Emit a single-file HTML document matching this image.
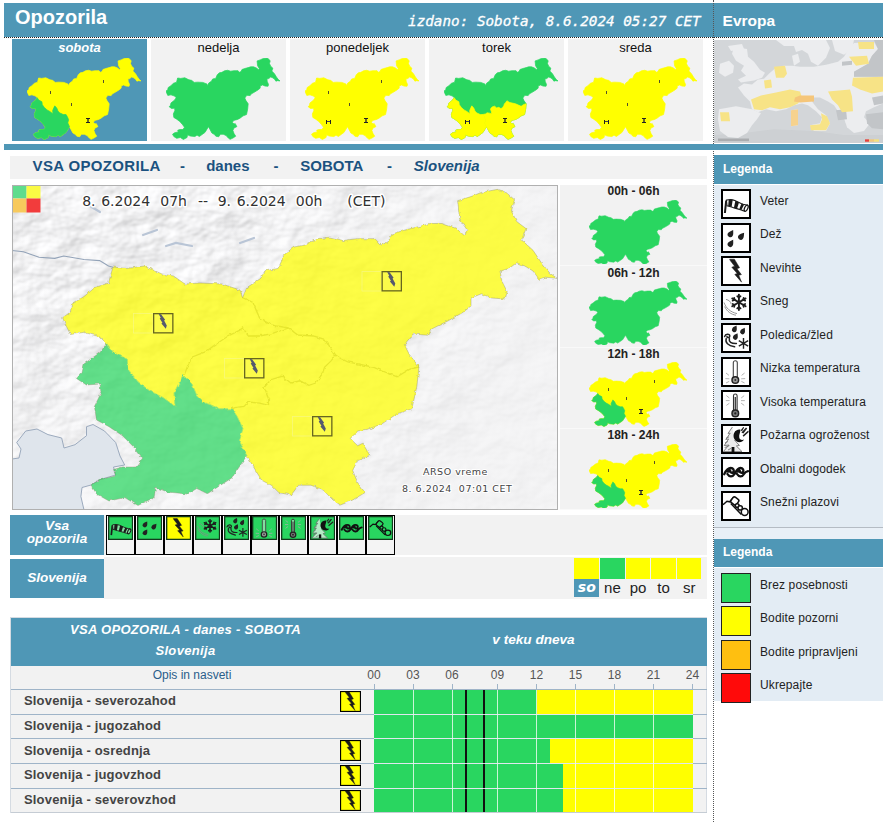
<!DOCTYPE html>
<html lang="sl"><head><meta charset="utf-8"><title>Opozorila</title>
<style>
html,body{margin:0;padding:0;background:#fff;}
body{width:893px;height:822px;position:relative;overflow:hidden;font-family:"Liberation Sans",Arial,sans-serif;color:#222;}
.abs{position:absolute;}
.b{position:absolute;background:#4f97b6;}
.g{position:absolute;background:#f2f2f2;}
.t{position:absolute;white-space:nowrap;line-height:1;}
.day{position:absolute;top:39px;width:135px;height:101.5px;background:#f2f2f2;}
.day span{position:absolute;left:0;right:0;top:2.4px;text-align:center;font-size:13px;line-height:13px;color:#111;}
.hl{position:absolute;left:560px;width:147px;text-align:center;font-weight:bold;font-size:12px;line-height:12px;color:#222;}
.lg{position:absolute;left:760px;font-size:12px;line-height:12px;color:#222;white-space:nowrap;letter-spacing:.12px;}
.ic{position:absolute;left:721px;}
.sq{position:absolute;left:721px;width:28px;height:28px;border:1px solid #222;}
.row{position:absolute;left:24px;font-weight:bold;font-size:13px;line-height:13px;color:#444;white-space:nowrap;letter-spacing:.17px;}
.hr{position:absolute;left:11px;width:696px;height:1px;background:#9fb4c8;}
.tk{position:absolute;top:669px;width:30px;text-align:center;font-size:12px;line-height:12px;color:#555;}
</style></head><body>

<svg width="0" height="0" style="position:absolute"><defs><polygon id="rNW" points="106.7,343.5 99.6,336.8 84,332.3 70.5,334.5 66,325.6 62.6,317.7 70.5,312 71.6,304.3 84,296.5 95,287.5 108.5,283 109.7,278.5 113,267 126.5,268.5 144,266 162,274 173.5,276 185,284 200,283 222,284 240,290 242.5,297.6 252.9,302.4 259.6,318 270.8,324.8 288.7,328 270.8,333.8 259.6,336 248.4,336 242.8,328 239.4,330.4 228.2,336 214.8,345 205.8,351.7 192.4,357 188,365 184.6,374 183,375 174,393 175,406.5 172,404 163,397.5 149.5,390.7 138,381.7 129,370.5 127,359 113.5,352.5"/><polygon id="rSW" points="106.7,343.5 113.5,352.5 127,359 129,370.5 138,381.7 149.5,390.7 163,397.5 172,404 175,406.5 174,393 183,375 192,384 196.7,395 205,403 210,404.5 219.7,408.8 232,408.8 237,416.2 243,428.5 239.4,441 246.8,455.6 232,477.8 207.4,493.8 200,490 196.7,488.6 187.7,494 167.5,492 156,487.5 154,497.6 138,505.5 124.7,497.6 109,501 96.6,494 91,485 100,479.6 115.7,476 113.5,469.5 122.5,467 136,467 142.7,458 133.7,447 122.5,435.7 109,426.7 96.6,420 94.4,406.5 101,393 100,384 86.5,385 76.4,378.4 82,372.7 84.2,363.7 100,352.5"/><polygon id="rC" points="183,375 184.6,374 188,365 192.4,357 205.8,351.7 214.8,345 228.2,336 239.4,330.4 242.8,328 248.4,336 259.6,336 270.8,333.8 288.7,328 297.7,335 313.3,336 324.5,339.3 331.3,349.4 335.7,355 331.3,360.6 324.5,367.3 322.3,374 315.6,383 308.9,385.3 299.9,380.8 291,383 282,376.3 270.8,379.7 264,387.5 268.5,398.7 268.5,405.4 259.6,403.2 248.4,402 244,406.5 235,407.7 232,408.8 219.7,408.8 210,404.5 205,403 196.7,395 192,384"/><polygon id="rNE" points="242.5,297.6 247,287.5 260.5,278.5 265,270.7 278,268.5 285,254 294,247 305,245 316.5,239 330,237 343,240.5 357,238.7 375,238.7 381,245 388,242 392,234 405,230 419,226.6 430,223.5 442,223.5 456.6,228.6 464.8,236 467,229.7 459.7,219.3 457.6,200.7 471,196.6 481.4,192.4 498,189.3 506,192.4 514.5,199.7 511.4,211 516.6,221.4 526,228.6 521.7,240 533,250.3 541.4,262.8 549.7,273 557,278.3 545.5,277.2 539.3,279.3 533,271 524.8,266 516.6,262.8 508.3,269 500,271 502,281.4 507.2,291.7 505.2,299 491.7,298 481.4,293.8 471,298 471,306.2 462.8,312.4 448.3,320.7 431.7,329 427.6,335.2 413,334 407,341.4 404.5,344.8 409.4,354.6 419,367 409.4,369.4 397,376.8 372.5,367 347.8,362 340,358 335.7,355 331.3,349.4 324.5,339.3 313.3,336 297.7,335 288.7,328 270.8,324.8 259.6,318 252.9,302.4"/><polygon id="rSE" points="335.7,355 340,358 347.8,362 372.5,367 397,376.8 409.4,369.4 419,367 416.8,386.7 411.9,408.8 397,413.8 382.3,423.6 370,428.5 357.7,431 350.3,438.4 357.7,445.8 362.6,443.3 370,455.6 357.7,460.6 352.7,470.4 357.7,482.7 365,492.6 352.7,500 340.4,505 333,500 323.2,490 310.9,485.2 298.5,485.2 291.2,495 278.8,492.6 271.4,485.2 261.6,480.3 254.2,468 246.8,455.6 239.4,441 243,428.5 237,416.2 232,408.8 235,407.7 244,406.5 248.4,402 259.6,403.2 268.5,405.4 268.5,398.7 264,387.5 270.8,379.7 282,376.3 291,383 299.9,380.8 308.9,385.3 315.6,383 322.3,374 324.5,367.3 331.3,360.6"/><polygon id="rO" points="106.7,343.5 99.6,336.8 84,332.3 70.5,334.5 66,325.6 62.6,317.7 70.5,312 71.6,304.3 84,296.5 95,287.5 108.5,283 109.7,278.5 113,267 126.5,268.5 144,266 162,274 173.5,276 185,284 200,283 222,284 240,290 242.5,297.6 247,287.5 260.5,278.5 265,270.7 278,268.5 285,254 294,247 305,245 316.5,239 330,237 343,240.5 357,238.7 375,238.7 381,245 388,242 392,234 405,230 419,226.6 430,223.5 442,223.5 456.6,228.6 464.8,236 467,229.7 459.7,219.3 457.6,200.7 471,196.6 481.4,192.4 498,189.3 506,192.4 514.5,199.7 511.4,211 516.6,221.4 526,228.6 521.7,240 533,250.3 541.4,262.8 549.7,273 557,278.3 545.5,277.2 539.3,279.3 533,271 524.8,266 516.6,262.8 508.3,269 500,271 502,281.4 507.2,291.7 505.2,299 491.7,298 481.4,293.8 471,298 471,306.2 462.8,312.4 448.3,320.7 431.7,329 427.6,335.2 413,334 407,341.4 404.5,344.8 409.4,354.6 419,367 416.8,386.7 411.9,408.8 397,413.8 382.3,423.6 370,428.5 357.7,431 350.3,438.4 357.7,445.8 362.6,443.3 370,455.6 357.7,460.6 352.7,470.4 357.7,482.7 365,492.6 352.7,500 340.4,505 333,500 323.2,490 310.9,485.2 298.5,485.2 291.2,495 278.8,492.6 271.4,485.2 261.6,480.3 254.2,468 246.8,455.6 232,477.8 207.4,493.8 200,490 196.7,488.6 187.7,494 167.5,492 156,487.5 154,497.6 138,505.5 124.7,497.6 109,501 96.6,494 91,485 100,479.6 115.7,476 113.5,469.5 122.5,467 136,467 142.7,458 133.7,447 122.5,435.7 109,426.7 96.6,420 94.4,406.5 101,393 100,384 86.5,385 76.4,378.4 82,372.7 84.2,363.7 100,352.5"/><g id="i0"><path d="M5.2 11.6 L3.9 24" stroke="#1a1a1a" stroke-width="2" fill="none"/><path d="M5.4 11.1 L7.5 10.7 L9.6 10.6 L11.7 10.9 L13.8 11.6 L15.9 12.5 L18.0 13.5 L20.1 14.5 L22.2 15.2 L24.3 15.7 L26.4 16.2 L23.8 22.1 L22.0 21.6 L20.2 21.0 L18.5 20.5 L16.7 19.9 L14.9 19.4 L13.1 18.9 L11.3 18.3 L9.6 17.8 L7.8 17.2 L6.0 16.7Z" fill="var(--bg,#fff)" stroke="#1a1a1a" stroke-width="1.1"/><path d="M7.7 10.7 L9.7 10.6 L11.7 10.9 L10.6 18.1 L8.9 17.6 L7.2 17.1Z M14.4 11.8 L16.2 12.6 L18.0 13.5 L16.0 19.7 L14.5 19.3 L12.9 18.8Z M20.5 14.6 L21.9 15.1 L23.2 15.4 L20.4 21.1 L19.3 20.7 L18.1 20.4Z" fill="#1a1a1a"/><ellipse cx="25.2" cy="19.2" rx="1.6" ry="3.3" transform="rotate(24 25.2 19.2)" fill="var(--bg,#fff)" stroke="#1a1a1a" stroke-width="1.3"/></g>
<g id="i1" fill="#222"><path d="M0 -4.1 C1.3 -2 2.7 -0.6 2.7 1.3 A2.7 2.7 0 1 1 -2.7 1.3 C-2.7 -0.6 -1.3 -2 0 -4.1Z" transform="translate(10 10.4) rotate(32)"/><path d="M0 -4.1 C1.3 -2 2.7 -0.6 2.7 1.3 A2.7 2.7 0 1 1 -2.7 1.3 C-2.7 -0.6 -1.3 -2 0 -4.1Z" transform="translate(20.6 13) rotate(38)"/><path d="M0 -4.1 C1.3 -2 2.7 -0.6 2.7 1.3 A2.7 2.7 0 1 1 -2.7 1.3 C-2.7 -0.6 -1.3 -2 0 -4.1Z" transform="translate(10 20.2) rotate(32)"/></g>
<g id="i2"><polygon points="8.6,3.2 13.4,3.2 18.6,11.7 16,12.8 20.4,18.6 17.8,19.3 20.6,26.2 13.8,18.4 16.2,17.4 10.8,11.2 13.6,10.2 9.4,4.8" fill="#1c1c1c" stroke="#1c1c1c" stroke-width="0.5" stroke-linejoin="round"/></g>
<g id="i3"><g stroke="#1c1c1c" stroke-width="1.9" fill="none" stroke-linecap="round"><path d="M17.9 4.6 V20 M11.2 8.4 L24.6 16.2 M11.2 16.2 L24.6 8.4"/><path stroke-width="1.7" d="M16.2 6.2 L17.9 7.6 L19.6 6.2 M16.2 18.4 L17.9 17 L19.6 18.4 M11.6 10.6 L13.6 9.8 L13.2 7.8 M24.2 14 L22.2 14.8 L22.6 16.8 M11.6 14 L13.6 14.8 L13.2 16.8 M24.2 10.6 L22.2 9.8 L22.6 7.8"/></g><path d="M3 12.5 C5 18 9 22 16 23.6 M3.6 16.5 C6 21.5 10 24.4 15 25.2 M5 9.4 C8 10 10 12 10.2 14.2" stroke="#8a8a8a" stroke-width="0.9" fill="none"/></g>
<g id="i4"><g fill="#222"><path d="M0 -3.6 C1.2 -1.8 2.4 -0.5 2.4 1.1 A2.4 2.4 0 1 1 -2.4 1.1 C-2.4 -0.5 -1.2 -1.8 0 -3.6Z" transform="translate(13.8 5.8) rotate(28)"/><path d="M0 -3.6 C1.2 -1.8 2.4 -0.5 2.4 1.1 A2.4 2.4 0 1 1 -2.4 1.1 C-2.4 -0.5 -1.2 -1.8 0 -3.6Z" transform="translate(22 8) rotate(28)"/><path d="M0 -3.6 C1.2 -1.8 2.4 -0.5 2.4 1.1 A2.4 2.4 0 1 1 -2.4 1.1 C-2.4 -0.5 -1.2 -1.8 0 -3.6Z" transform="translate(14.8 13.4) rotate(28)"/></g><path d="M3.6 13.6 C4.4 10.6 8.8 10.4 8.8 13 C8.8 15 5.8 15 6 13.4 M5.2 15.6 C4 19.6 7 22.4 13.6 23.8 M8.4 15.6 C7.6 18.6 10 20.8 15.4 20.6" stroke="#222" stroke-width="1.5" fill="none" stroke-linecap="round"/><path d="M22.5 15 V25.8 M17.8 17.7 L27.2 23.1 M17.8 23.1 L27.2 17.7" stroke="#222" stroke-width="1.4" fill="none"/></g>
<g id="i5"><g stroke="#aaa" stroke-width="0.9"><path d="M5 16 L8 18.4 M4.4 21.6 L8.4 21.8 M5 26 L8.2 24.4 M23.6 16 L20.6 18.4 M24.2 21.6 L20.2 21.8 M23.6 26 L20.4 24.4"/></g><rect x="12.3" y="3.8" width="4" height="18" rx="2" fill="var(--bg,#fff)" stroke="#444" stroke-width="1.1"/><circle cx="14.3" cy="23" r="3.3" fill="#999" stroke="#222" stroke-width="1.5"/><circle cx="14.3" cy="23" r="1" fill="#333"/></g>
<g id="i6"><g stroke="#aaa" stroke-width="0.9"><path d="M5.4 5.6 L8.4 8 M4.8 10.6 L8.6 10.6 M5.4 15.4 L8.4 13.2 M23.2 5.6 L20.2 8 M23.8 10.6 L20 10.6 M23.2 15.4 L20.2 13.2"/></g><rect x="12.5" y="4" width="3.6" height="18" rx="1.8" fill="var(--bg,#fff)" stroke="#333" stroke-width="1.1"/><rect x="13.6" y="7" width="1.4" height="15" fill="#444"/><circle cx="14.3" cy="23.4" r="3.3" fill="#777" stroke="#222" stroke-width="1.5"/><circle cx="14.3" cy="23.4" r="1.1" fill="#222"/></g>
<g id="i7"><path d="M11.4 3 L7 9.4 L9.2 9.2 L4.8 15.4 L7.6 15 L3.2 21.6 L7.8 21 L2.4 27.6 H21 L15.4 22 L18.4 21.4 L13.4 16" fill="var(--tr,#ececec)" stroke="#666" stroke-width="0.8"/><path d="M4 19 L7 17.4 M3.6 23.6 L8.4 21.6 M5 14.4 L8 12.8 M7 26 L10 24.4" stroke="#777" stroke-width="0.9"/><rect x="10.6" y="23" width="2.8" height="5" fill="#111"/><path d="M19.4 5.6 C13.6 5 11.4 10.6 13.2 14.8 C15 18.8 20.8 19.6 23 15.6 C20.6 16.6 18.6 15.6 18.2 13.2 C17.8 10.6 19.6 8.6 19.4 5.6Z" fill="#111"/><path d="M20.4 8.6 L25 3.4 L26.2 4.4 L22.4 9.4Z M21.6 11.6 L27.2 6.6 L27.8 8 L22.6 12.8Z M19.6 6.4 L22.2 3 L23.2 3.6 L21 7.2Z" fill="#222"/></g>
<g id="i8"><path d="M3.2 17.2 C5 13.4 7 11 9.8 11 C12.4 11 13.4 13.2 12.4 14.8 C11.4 16.4 9 15.8 9.4 14 M6.4 17 C8.2 20 11.4 20.4 13.4 17.2 C15 14 16.4 11 19.4 11 C22 11 23 13.2 22 14.8 C21 16.4 18.6 15.8 19 14 M16 17 C17.8 20 21 20.4 22.8 17.2 C23.8 15.6 25 14.6 27 14.2" stroke="#111" stroke-width="2.3" fill="none" stroke-linecap="round"/><path d="M5 15 C6.4 12.8 8 11.6 9.8 11.6 L9.4 14.4 C8.4 15.6 6.6 16.4 5 15Z M14.6 15 C16 12.8 17.6 11.6 19.4 11.6 L19 14.4 C18 15.6 16.2 16.4 14.6 15Z" fill="#111"/></g>
<g id="i9" stroke="#111" stroke-width="1.5" fill="var(--b2,#fff)"><path d="M2 13.8 L6 10.2 L8.8 10.8 L12.6 6 M9.8 12.4 L20.4 23.6" fill="none"/><rect x="10.4" y="6.6" width="6.8" height="6.8" rx="1.8" transform="rotate(38 13.8 10)"/><circle cx="16.2" cy="14.6" r="1.9"/><circle cx="19.2" cy="16.9" r="2.2"/><circle cx="23.7" cy="21" r="3.4"/></g>
</defs></svg>
<div class="b" style="left:4px;top:3px;width:879px;height:34px"></div>
<div class="t" style="left:15px;top:7px;font-size:20px;font-weight:bold;color:#fff">Opozorila</div>
<div class="t" style="right:192.3px;top:13.7px;-webkit-text-stroke:.3px #fff;font-family:'DejaVu Sans Mono','Liberation Mono',monospace;font-style:italic;font-size:14.3px;color:#fff">izdano: Sobota, 8.6.2024 05:27 CET</div>
<div class="t" style="left:722.6px;top:12.7px;font-size:15.5px;font-weight:bold;color:#fff">Evropa</div>
<div class="abs" style="left:4px;top:37px;width:879px;height:0;border-top:1px dotted #222"></div>
<div class="abs" style="left:713px;top:0;width:0;height:822px;border-left:1px dotted #555"></div>
<div class="b" style="left:4px;top:144px;width:879px;height:6px"></div>
<div class="day" style="left:12px;background:#4f97b6;"><span style="color:#fff;font-weight:bold;font-style:italic">sobota</span></div>
<svg class="abs" style="left:27px;top:58px" width="114" height="81.5" viewBox="62.6 189.3 494.4 316.2" preserveAspectRatio="none"><use href="#rO" fill="#ffff00" stroke="#ffff00" stroke-width="3"/><use href="#rSW" fill="#29d660" stroke="#29d660" stroke-width="3"/></svg><div class="abs" style="left:49.7px;top:91.0px;width:1px;height:3px;background:#55502a"></div><div class="abs" style="left:102.5px;top:80.4px;width:1px;height:3px;background:#55502a"></div><div class="abs" style="left:70.6px;top:102.6px;width:1px;height:3px;background:#55502a"></div><div class="abs" style="left:85.7px;top:117.8px;width:4px;height:3px;border-top:1px solid #222;border-bottom:1px solid #222"><div style="margin:0 1px;height:3px;background:#6b6b20"></div></div>
<div class="day" style="left:151px;"><span>nedelja</span></div>
<svg class="abs" style="left:166px;top:58px" width="114" height="81.5" viewBox="62.6 189.3 494.4 316.2" preserveAspectRatio="none"><use href="#rO" fill="#29d660" stroke="#29d660" stroke-width="3"/></svg>
<div class="day" style="left:290px;"><span>ponedeljek</span></div>
<svg class="abs" style="left:305px;top:58px" width="114" height="81.5" viewBox="62.6 189.3 494.4 316.2" preserveAspectRatio="none"><use href="#rO" fill="#ffff00" stroke="#ffff00" stroke-width="3"/></svg><div class="abs" style="left:327.7px;top:91.0px;width:1px;height:3px;background:#55502a"></div><div class="abs" style="left:380.5px;top:80.4px;width:1px;height:3px;background:#55502a"></div><div class="abs" style="left:348.6px;top:102.6px;width:1px;height:3px;background:#55502a"></div><div class="abs" style="left:363.7px;top:117.8px;width:4px;height:3px;border-top:1px solid #222;border-bottom:1px solid #222"><div style="margin:0 1px;height:3px;background:#6b6b20"></div></div><div class="abs" style="left:325.9px;top:119.6px;width:3px;height:4px;border-left:1px solid #222;border-right:1px solid #222"><div style="margin-top:1.5px;height:1px;background:#444"></div></div>
<div class="day" style="left:429px;"><span>torek</span></div>
<svg class="abs" style="left:444px;top:58px" width="114" height="81.5" viewBox="62.6 189.3 494.4 316.2" preserveAspectRatio="none"><use href="#rO" fill="#29d660" stroke="#29d660" stroke-width="3"/><use href="#rSE" fill="#ffff00" stroke="#ffff00" stroke-width="3"/><use href="#rSW" fill="#ffff00" stroke="#ffff00" stroke-width="3"/></svg><div class="abs" style="left:502.7px;top:117.8px;width:4px;height:3px;border-top:1px solid #222;border-bottom:1px solid #222"><div style="margin:0 1px;height:3px;background:#6b6b20"></div></div><div class="abs" style="left:464.9px;top:119.6px;width:3px;height:4px;border-left:1px solid #222;border-right:1px solid #222"><div style="margin-top:1.5px;height:1px;background:#444"></div></div>
<div class="day" style="left:568px;"><span>sreda</span></div>
<svg class="abs" style="left:583px;top:58px" width="114" height="81.5" viewBox="62.6 189.3 494.4 316.2" preserveAspectRatio="none"><use href="#rO" fill="#ffff00" stroke="#ffff00" stroke-width="3"/></svg><div class="abs" style="left:605.7px;top:91.0px;width:1px;height:3px;background:#55502a"></div><div class="abs" style="left:658.5px;top:80.4px;width:1px;height:3px;background:#55502a"></div><div class="abs" style="left:626.6px;top:102.6px;width:1px;height:3px;background:#55502a"></div><div class="abs" style="left:641.7px;top:117.8px;width:4px;height:3px;border-top:1px solid #222;border-bottom:1px solid #222"><div style="margin:0 1px;height:3px;background:#6b6b20"></div></div><div class="abs" style="left:603.9px;top:119.6px;width:3px;height:4px;border-left:1px solid #222;border-right:1px solid #222"><div style="margin-top:1.5px;height:1px;background:#444"></div></div>
<svg class="abs" style="left:714px;top:40px" width="169" height="103" viewBox="0 0 169 104" preserveAspectRatio="none">
<defs><filter id="eb" x="-5%" y="-5%" width="110%" height="110%"><feGaussianBlur stdDeviation="0.7"/></filter><clipPath id="ec"><rect width="169" height="104"/></clipPath></defs>
<rect width="169" height="104" fill="#d3d6d9"/>
<g clip-path="url(#ec)"><g filter="url(#eb)">
<polygon points="0,96 30,94 60,90 100,92 130,96 169,96 169,104 0,104" fill="#cdd0d3"/>
<g fill="#ecedef">
<polygon points="14,6 28,4 30,9 17,11"/>
<polygon points="6,24 15,21 20,26 19,33 11,37 5,33"/>
<polygon points="20,7 33,9 34,17 40,22 46,30 51,33 48,38 40,41 27,43 24,40 32,36 27,31 30,26 22,21 18,14"/>
<polygon points="62,0 112,0 116,8 112,18 104,26 97,22 94,14 88,10 82,12 80,6 70,6"/>
<polygon points="118,0 140,0 138,9 130,15 121,11"/>
<polygon points="78,16 84,14 86,22 80,26"/>
<polygon points="24,48 30,44 38,45 44,40 50,39 56,33 62,28 70,26 78,26 86,27 100,27 112,25 124,22 130,17 134,10 140,3 160,2 164,9 158,16 154,24 147,28 140,32 140,37 169,37 169,64 160,68 152,72 150,78 156,84 150,92 140,92 132,84 130,78 124,72 120,66 114,62 106,58 100,58 98,62 104,70 112,76 116,84 112,92 100,92 96,86 106,84 108,78 102,72 94,66 88,64 80,66 72,70 62,72 52,70 44,73 38,70 36,62 30,56"/>
<polygon points="5,70 22,67 38,70 47,74 43,80 38,86 33,94 24,99 14,98 6,92 4,80"/>
<polygon points="77,71 84,70 84,86 77,87"/>
<polygon points="130,79 148,78 150,92 140,94 133,88"/>
</g>
<g fill="#c2c5c8">
<polygon points="160,0 169,0 169,37 140,37 140,32 147,28 154,24 158,16 164,9"/>
<polygon points="128,22 138,21 138,25 128,26"/>
<polygon points="152,75 169,73 169,90 158,89 153,84"/>
<polygon points="122,71 132,70 133,80 124,81"/>
<polygon points="158,58 169,56 169,64 160,66"/>
</g>
<g fill="#f7e386">
<polygon points="37,60 47,56 62,53 76,50 86,52 88,58 84,64 76,68 66,70 56,68 48,71 40,70"/>
<polygon points="50,41 57,40 58,48 51,49"/>
<polygon points="60,27 71,26 73,34 70,38 62,38"/>
<polygon points="114,52 136,50 138,57 139,72 128,73 124,66 118,60"/>
<polygon points="139,38 169,37 169,52 158,54 146,50 138,46"/>
<polygon points="6,73 15,73 16,82 7,82"/>
<polygon points="107,74 113,77 116,84 112,91 97,91 96,86 106,85 108,80"/>
<polygon points="144,2 160,2 160,9 145,9"/>
<polygon points="135,17 153,16 155,24 142,26"/>
</g>
<polygon points="86,56 100,56 100,62 86,63 80,62 81,58" fill="#f5c67a"/>
<polygon points="77,71 84,70 84,86 77,87" fill="#f6d28e"/>
</g></g>
<rect x="4" y="99.5" width="31" height="2.6" fill="#9da0a3" opacity=".75"/>
<rect x="151" y="100.3" width="4" height="2.4" fill="#e8403a"/><rect x="155" y="100.3" width="5" height="2.4" fill="#f4c87a"/><rect x="160" y="100.3" width="5" height="2.4" fill="#f6e17c"/>
</svg>

<div class="g" style="left:10px;top:156px;width:697px;height:22.5px"></div>
<div class="t" style="left:32.6px;top:157.7px;font-size:15px;font-weight:bold;color:#1b5280;"><span style="letter-spacing:.35px">VSA OPOZORILA</span></div>
<div class="t" style="left:180px;top:157.7px;font-size:15px;font-weight:bold;color:#1b5280;">-</div>
<div class="t" style="left:206.2px;top:157.7px;font-size:15px;font-weight:bold;color:#1b5280;">danes</div>
<div class="t" style="left:273.5px;top:157.7px;font-size:15px;font-weight:bold;color:#1b5280;">-</div>
<div class="t" style="left:300.3px;top:157.7px;font-size:15px;font-weight:bold;color:#1b5280;">SOBOTA</div>
<div class="t" style="left:387px;top:157.7px;font-size:15px;font-weight:bold;color:#1b5280;">-</div>
<div class="t" style="left:413.8px;top:157.7px;font-size:15px;font-weight:bold;color:#1b5280;font-style:italic;">Slovenija</div>
<svg class="abs" style="left:12px;top:185px" width="546" height="325" viewBox="12 185 546 325"><defs><filter id="ter" x="0" y="0" width="100%" height="100%" color-interpolation-filters="sRGB"><feTurbulence type="fractalNoise" baseFrequency="0.022 0.03" numOctaves="4" seed="11" result="n"/><feDiffuseLighting in="n" surfaceScale="6" diffuseConstant="1" lighting-color="#ffffff" result="l"><feDistantLight azimuth="225" elevation="50"/></feDiffuseLighting><feComponentTransfer><feFuncR type="linear" slope="0.3" intercept="0.715"/><feFuncG type="linear" slope="0.3" intercept="0.715"/><feFuncB type="linear" slope="0.3" intercept="0.72"/></feComponentTransfer></filter><filter id="jag" x="-2%" y="-2%" width="104%" height="104%"><feTurbulence type="fractalNoise" baseFrequency="0.22" numOctaves="2" seed="4" result="t"/><feDisplacementMap in="SourceGraphic" in2="t" scale="3.2" xChannelSelector="R" yChannelSelector="G"/></filter></defs><rect x="12" y="185" width="546" height="325" fill="#f1f1f2" filter="url(#ter)"/><radialGradient id="tg" gradientUnits="userSpaceOnUse" cx="120" cy="215" r="430"><stop offset="0.2" stop-color="#f3f3f4" stop-opacity="0"/><stop offset="1" stop-color="#f3f3f4" stop-opacity="0.8"/></radialGradient><rect x="12" y="185" width="546" height="325" fill="url(#tg)"/><polygon points="12,459 19,458 21,449 16.7,442.5 25.7,431 37,429 48,434.6 61.7,438 64,448 75,444.7 86.5,435.7 86.5,426.7 93,424.5 104.5,431 115.7,442.5 120,456 124.7,465 113.5,467 115.7,475 100,479.6 91,485 82,487.5 80.9,496.5 84,510 12,510" fill="#dfe5ec" stroke="#93a3b8" stroke-width="0.9"/><path d="M12 250.5 L23.4 251.7 L39 257.3 L54.8 258.4 L63.7 256 L84 259.5 L99.6 260.6 L108.5 266 L113 267.3" fill="none" stroke="#93a3b8" stroke-width="1.1"/><g stroke="#b9c5d6" stroke-width="2.2" stroke-linecap="round" fill="none"><path d="M143 235 L157 230"/><path d="M166 246 L176 243 L192 246"/><path d="M240 243 L254 238"/><path d="M90 206 L100 212"/></g><g filter="url(#jag)"><polygon points="106.7,343.5 99.6,336.8 84,332.3 70.5,334.5 66,325.6 62.6,317.7 70.5,312 71.6,304.3 84,296.5 95,287.5 108.5,283 109.7,278.5 113,267 126.5,268.5 144,266 162,274 173.5,276 185,284 200,283 222,284 240,290 242.5,297.6 252.9,302.4 259.6,318 270.8,324.8 288.7,328 270.8,333.8 259.6,336 248.4,336 242.8,328 239.4,330.4 228.2,336 214.8,345 205.8,351.7 192.4,357 188,365 184.6,374 183,375 174,393 175,406.5 172,404 163,397.5 149.5,390.7 138,381.7 129,370.5 127,359 113.5,352.5" fill="#ffff00" fill-opacity=".72"/><polygon points="242.5,297.6 247,287.5 260.5,278.5 265,270.7 278,268.5 285,254 294,247 305,245 316.5,239 330,237 343,240.5 357,238.7 375,238.7 381,245 388,242 392,234 405,230 419,226.6 430,223.5 442,223.5 456.6,228.6 464.8,236 467,229.7 459.7,219.3 457.6,200.7 471,196.6 481.4,192.4 498,189.3 506,192.4 514.5,199.7 511.4,211 516.6,221.4 526,228.6 521.7,240 533,250.3 541.4,262.8 549.7,273 557,278.3 545.5,277.2 539.3,279.3 533,271 524.8,266 516.6,262.8 508.3,269 500,271 502,281.4 507.2,291.7 505.2,299 491.7,298 481.4,293.8 471,298 471,306.2 462.8,312.4 448.3,320.7 431.7,329 427.6,335.2 413,334 407,341.4 404.5,344.8 409.4,354.6 419,367 409.4,369.4 397,376.8 372.5,367 347.8,362 340,358 335.7,355 331.3,349.4 324.5,339.3 313.3,336 297.7,335 288.7,328 270.8,324.8 259.6,318 252.9,302.4" fill="#ffff00" fill-opacity=".72"/><polygon points="183,375 184.6,374 188,365 192.4,357 205.8,351.7 214.8,345 228.2,336 239.4,330.4 242.8,328 248.4,336 259.6,336 270.8,333.8 288.7,328 297.7,335 313.3,336 324.5,339.3 331.3,349.4 335.7,355 331.3,360.6 324.5,367.3 322.3,374 315.6,383 308.9,385.3 299.9,380.8 291,383 282,376.3 270.8,379.7 264,387.5 268.5,398.7 268.5,405.4 259.6,403.2 248.4,402 244,406.5 235,407.7 232,408.8 219.7,408.8 210,404.5 205,403 196.7,395 192,384" fill="#ffff00" fill-opacity=".72"/><polygon points="335.7,355 340,358 347.8,362 372.5,367 397,376.8 409.4,369.4 419,367 416.8,386.7 411.9,408.8 397,413.8 382.3,423.6 370,428.5 357.7,431 350.3,438.4 357.7,445.8 362.6,443.3 370,455.6 357.7,460.6 352.7,470.4 357.7,482.7 365,492.6 352.7,500 340.4,505 333,500 323.2,490 310.9,485.2 298.5,485.2 291.2,495 278.8,492.6 271.4,485.2 261.6,480.3 254.2,468 246.8,455.6 239.4,441 243,428.5 237,416.2 232,408.8 235,407.7 244,406.5 248.4,402 259.6,403.2 268.5,405.4 268.5,398.7 264,387.5 270.8,379.7 282,376.3 291,383 299.9,380.8 308.9,385.3 315.6,383 322.3,374 324.5,367.3 331.3,360.6" fill="#ffff00" fill-opacity=".72"/><polygon points="106.7,343.5 113.5,352.5 127,359 129,370.5 138,381.7 149.5,390.7 163,397.5 172,404 175,406.5 174,393 183,375 192,384 196.7,395 205,403 210,404.5 219.7,408.8 232,408.8 237,416.2 243,428.5 239.4,441 246.8,455.6 232,477.8 207.4,493.8 200,490 196.7,488.6 187.7,494 167.5,492 156,487.5 154,497.6 138,505.5 124.7,497.6 109,501 96.6,494 91,485 100,479.6 115.7,476 113.5,469.5 122.5,467 136,467 142.7,458 133.7,447 122.5,435.7 109,426.7 96.6,420 94.4,406.5 101,393 100,384 86.5,385 76.4,378.4 82,372.7 84.2,363.7 100,352.5" fill="#29d660" fill-opacity=".72"/><polyline points="106.7,343.5 113.5,352.5 127,359 129,370.5 138,381.7 149.5,390.7 163,397.5 172,404 175,406.5 174,393 183,375" fill="none" stroke="#a8e860" stroke-width="1" opacity=".9"/><polyline points="183,375 192,384 196.7,395 205,403 210,404.5 219.7,408.8 232,408.8" fill="none" stroke="#a8e860" stroke-width="1" opacity=".9"/><polyline points="232,408.8 237,416.2 243,428.5 239.4,441 246.8,455.6" fill="none" stroke="#a8e860" stroke-width="1" opacity=".9"/><polyline points="183,375 184.6,374 188,365 192.4,357 205.8,351.7 214.8,345 228.2,336 239.4,330.4 242.8,328 248.4,336 259.6,336 270.8,333.8 288.7,328" fill="none" stroke="#e6e62e" stroke-width="1.3"/><polyline points="242.5,297.6 252.9,302.4 259.6,318 270.8,324.8 288.7,328" fill="none" stroke="#e6e62e" stroke-width="1.3"/><polyline points="288.7,328 297.7,335 313.3,336 324.5,339.3 331.3,349.4 335.7,355" fill="none" stroke="#e6e62e" stroke-width="1.3"/><polyline points="335.7,355 340,358 347.8,362 372.5,367 397,376.8 409.4,369.4 419,367" fill="none" stroke="#e6e62e" stroke-width="1.3"/><polyline points="335.7,355 331.3,360.6 324.5,367.3 322.3,374 315.6,383 308.9,385.3 299.9,380.8 291,383 282,376.3 270.8,379.7 264,387.5 268.5,398.7 268.5,405.4 259.6,403.2 248.4,402 244,406.5 235,407.7 232,408.8" fill="none" stroke="#e6e62e" stroke-width="1.3"/><polygon points="106.7,343.5 99.6,336.8 84,332.3 70.5,334.5 66,325.6 62.6,317.7 70.5,312 71.6,304.3 84,296.5 95,287.5 108.5,283 109.7,278.5 113,267 126.5,268.5 144,266 162,274 173.5,276 185,284 200,283 222,284 240,290 242.5,297.6 247,287.5 260.5,278.5 265,270.7 278,268.5 285,254 294,247 305,245 316.5,239 330,237 343,240.5 357,238.7 375,238.7 381,245 388,242 392,234 405,230 419,226.6 430,223.5 442,223.5 456.6,228.6 464.8,236 467,229.7 459.7,219.3 457.6,200.7 471,196.6 481.4,192.4 498,189.3 506,192.4 514.5,199.7 511.4,211 516.6,221.4 526,228.6 521.7,240 533,250.3 541.4,262.8 549.7,273 557,278.3 545.5,277.2 539.3,279.3 533,271 524.8,266 516.6,262.8 508.3,269 500,271 502,281.4 507.2,291.7 505.2,299 491.7,298 481.4,293.8 471,298 471,306.2 462.8,312.4 448.3,320.7 431.7,329 427.6,335.2 413,334 407,341.4 404.5,344.8 409.4,354.6 419,367 416.8,386.7 411.9,408.8 397,413.8 382.3,423.6 370,428.5 357.7,431 350.3,438.4 357.7,445.8 362.6,443.3 370,455.6 357.7,460.6 352.7,470.4 357.7,482.7 365,492.6 352.7,500 340.4,505 333,500 323.2,490 310.9,485.2 298.5,485.2 291.2,495 278.8,492.6 271.4,485.2 261.6,480.3 254.2,468 246.8,455.6 232,477.8 207.4,493.8 200,490 196.7,488.6 187.7,494 167.5,492 156,487.5 154,497.6 138,505.5 124.7,497.6 109,501 96.6,494 91,485 100,479.6 115.7,476 113.5,469.5 122.5,467 136,467 142.7,458 133.7,447 122.5,435.7 109,426.7 96.6,420 94.4,406.5 101,393 100,384 86.5,385 76.4,378.4 82,372.7 84.2,363.7 100,352.5" fill="none" stroke="#8f8f70" stroke-width="0.9" opacity=".45"/></g><rect x="12.5" y="185.5" width="14" height="13" fill="#5fdc8d"/><rect x="26.5" y="185.5" width="14" height="13" fill="#fafa44"/><rect x="12.5" y="198.5" width="14" height="14" fill="#f7c95c"/><rect x="26.5" y="198.5" width="14" height="14" fill="#f23c3c"/><text y="206.4" font-family="'DejaVu Sans',Verdana,sans-serif" font-size="14" fill="#303030" stroke="#fff" stroke-width="3" stroke-linejoin="round" paint-order="stroke"><tspan x="82.2">8.</tspan><tspan x="101.2">6.2024</tspan><tspan x="160.3">07h</tspan><tspan x="198">--</tspan><tspan x="217.7">9.</tspan><tspan x="236.7">6.2024</tspan><tspan x="295.8">00h</tspan><tspan x="347.3">(CET)</tspan></text><text x="423" y="475" font-family="'DejaVu Sans',Verdana,sans-serif" font-size="9.5" fill="#444" stroke="#fff" stroke-width="2" paint-order="stroke" letter-spacing="0.5">ARSO vreme</text><text x="402" y="492" font-family="'DejaVu Sans',Verdana,sans-serif" font-size="9.5" fill="#444" stroke="#fff" stroke-width="2" paint-order="stroke" letter-spacing="0.5" xml:space="preserve">8. 6.2024  07:01 CET</text><rect x="133.5" y="313.5" width="19.5" height="19.5" fill="none" stroke="#f6f6a0" stroke-width="0.8" opacity=".6"/><g transform="translate(153 313)"><rect x="0.65" y="0.65" width="19.2" height="19.2" fill="#fbfb4a" stroke="#66661f" stroke-width="1.3"/><polygon points="5.7,1 8.1,1.3 12.1,6.7 11.1,7.4 13.8,12.4 12.8,15.8 10.1,12.4 8.4,10.4 9.4,9.7 6.7,5.4 7.7,4.7" fill="#555a6e"/></g><rect x="362" y="271.5" width="19.5" height="19.5" fill="none" stroke="#f6f6a0" stroke-width="0.8" opacity=".6"/><g transform="translate(381.5 271)"><rect x="0.65" y="0.65" width="19.2" height="19.2" fill="#fbfb4a" stroke="#66661f" stroke-width="1.3"/><polygon points="5.7,1 8.1,1.3 12.1,6.7 11.1,7.4 13.8,12.4 12.8,15.8 10.1,12.4 8.4,10.4 9.4,9.7 6.7,5.4 7.7,4.7" fill="#555a6e"/></g><rect x="224.5" y="358.5" width="19.5" height="19.5" fill="none" stroke="#f6f6a0" stroke-width="0.8" opacity=".6"/><g transform="translate(244 358)"><rect x="0.65" y="0.65" width="19.2" height="19.2" fill="#fbfb4a" stroke="#66661f" stroke-width="1.3"/><polygon points="5.7,1 8.1,1.3 12.1,6.7 11.1,7.4 13.8,12.4 12.8,15.8 10.1,12.4 8.4,10.4 9.4,9.7 6.7,5.4 7.7,4.7" fill="#555a6e"/></g><rect x="292.5" y="416.5" width="19.5" height="19.5" fill="none" stroke="#f6f6a0" stroke-width="0.8" opacity=".6"/><g transform="translate(312 416)"><rect x="0.65" y="0.65" width="19.2" height="19.2" fill="#fbfb4a" stroke="#66661f" stroke-width="1.3"/><polygon points="5.7,1 8.1,1.3 12.1,6.7 11.1,7.4 13.8,12.4 12.8,15.8 10.1,12.4 8.4,10.4 9.4,9.7 6.7,5.4 7.7,4.7" fill="#555a6e"/></g><rect x="12.5" y="185.5" width="545" height="324" fill="none" stroke="#b0b0b0" stroke-width="1"/></svg>
<div class="g" style="left:560px;top:185px;width:147px;height:81.3px;border-bottom:1px solid #f9f9f9;box-sizing:border-box"></div>
<div class="hl" style="top:185.3px">00h - 06h</div>
<svg class="abs" style="left:589px;top:199.6px" width="98" height="64.5" viewBox="62.6 189.3 494.4 316.2" preserveAspectRatio="none"><use href="#rO" fill="#29d660" stroke="#29d660" stroke-width="3"/></svg>
<div class="g" style="left:560px;top:266.3px;width:147px;height:81.3px;border-bottom:1px solid #f9f9f9;box-sizing:border-box"></div>
<div class="hl" style="top:266.6px">06h - 12h</div>
<svg class="abs" style="left:589px;top:280.9px" width="98" height="64.5" viewBox="62.6 189.3 494.4 316.2" preserveAspectRatio="none"><use href="#rO" fill="#29d660" stroke="#29d660" stroke-width="3"/></svg>
<div class="g" style="left:560px;top:347.6px;width:147px;height:81.3px;border-bottom:1px solid #f9f9f9;box-sizing:border-box"></div>
<div class="hl" style="top:347.9px">12h - 18h</div>
<svg class="abs" style="left:589px;top:362.2px" width="98" height="64.5" viewBox="62.6 189.3 494.4 316.2" preserveAspectRatio="none"><use href="#rO" fill="#ffff00" stroke="#ffff00" stroke-width="3"/><use href="#rSW" fill="#29d660" stroke="#29d660" stroke-width="3"/></svg><div class="abs" style="left:608.4px;top:388.0px;width:1px;height:3px;background:#55502a"></div><div class="abs" style="left:653.8px;top:379.6px;width:1px;height:3px;background:#55502a"></div><div class="abs" style="left:626.4px;top:397.2px;width:1px;height:3px;background:#55502a"></div><div class="abs" style="left:639.2px;top:409.0px;width:4px;height:3px;border-top:1px solid #222;border-bottom:1px solid #222"><div style="margin:0 1px;height:3px;background:#6b6b20"></div></div>
<div class="g" style="left:560px;top:428.9px;width:147px;height:81.3px;border-bottom:1px solid #f9f9f9;box-sizing:border-box"></div>
<div class="hl" style="top:429.2px">18h - 24h</div>
<svg class="abs" style="left:589px;top:443.5px" width="98" height="64.5" viewBox="62.6 189.3 494.4 316.2" preserveAspectRatio="none"><use href="#rO" fill="#ffff00" stroke="#ffff00" stroke-width="3"/><use href="#rSW" fill="#29d660" stroke="#29d660" stroke-width="3"/></svg><div class="abs" style="left:608.4px;top:469.3px;width:1px;height:3px;background:#55502a"></div><div class="abs" style="left:653.8px;top:460.9px;width:1px;height:3px;background:#55502a"></div><div class="abs" style="left:626.4px;top:478.5px;width:1px;height:3px;background:#55502a"></div><div class="abs" style="left:639.2px;top:490.3px;width:4px;height:3px;border-top:1px solid #222;border-bottom:1px solid #222"><div style="margin:0 1px;height:3px;background:#6b6b20"></div></div>
<div class="b" style="left:10px;top:515px;width:94px;height:40px"></div>
<div class="g" style="left:104px;top:515px;width:603px;height:40px"></div>
<div class="t" style="left:10px;top:519.3px;width:94px;text-align:center;font-size:13.6px;line-height:13px;font-weight:bold;font-style:italic;color:#fff;white-space:normal">Vsa<br>opozorila</div>
<div class="abs" style="left:106.3px;top:515px;width:28.85px;height:40px;border:1px solid #000;background:#f4f4f4;box-sizing:border-box"></div>
<svg class="abs" style="left:108.1px;top:516px;--bg:#83dea0;--tr:#b5ebc6;--b2:#29d660" width="25.2" height="24" viewBox="0 0 30 30" preserveAspectRatio="none"><rect x="0.8" y="0.8" width="28.4" height="28.4" fill="#29d660" stroke="#123a1c" stroke-width="1.6"/><use href="#i0"/></svg>
<div class="abs" style="left:135.15px;top:515px;width:28.85px;height:40px;border:1px solid #000;background:#f4f4f4;box-sizing:border-box"></div>
<svg class="abs" style="left:136.95px;top:516px;--bg:#83dea0;--tr:#b5ebc6;--b2:#29d660" width="25.2" height="24" viewBox="0 0 30 30" preserveAspectRatio="none"><rect x="0.8" y="0.8" width="28.4" height="28.4" fill="#29d660" stroke="#123a1c" stroke-width="1.6"/><use href="#i1"/></svg>
<div class="abs" style="left:164px;top:515px;width:28.85px;height:40px;border:1px solid #000;background:#f4f4f4;box-sizing:border-box"></div>
<svg class="abs" style="left:165.8px;top:516px;--bg:#83dea0;--tr:#b5ebc6;--b2:#ffff00" width="25.2" height="24" viewBox="0 0 30 30" preserveAspectRatio="none"><rect x="0.8" y="0.8" width="28.4" height="28.4" fill="#ffff00" stroke="#123a1c" stroke-width="1.6"/><use href="#i2"/></svg>
<div class="abs" style="left:192.85px;top:515px;width:28.85px;height:40px;border:1px solid #000;background:#f4f4f4;box-sizing:border-box"></div>
<svg class="abs" style="left:194.65px;top:516px;--bg:#83dea0;--tr:#b5ebc6;--b2:#29d660" width="25.2" height="24" viewBox="0 0 30 30" preserveAspectRatio="none"><rect x="0.8" y="0.8" width="28.4" height="28.4" fill="#29d660" stroke="#123a1c" stroke-width="1.6"/><use href="#i3"/></svg>
<div class="abs" style="left:221.7px;top:515px;width:28.85px;height:40px;border:1px solid #000;background:#f4f4f4;box-sizing:border-box"></div>
<svg class="abs" style="left:223.5px;top:516px;--bg:#83dea0;--tr:#b5ebc6;--b2:#29d660" width="25.2" height="24" viewBox="0 0 30 30" preserveAspectRatio="none"><rect x="0.8" y="0.8" width="28.4" height="28.4" fill="#29d660" stroke="#123a1c" stroke-width="1.6"/><use href="#i4"/></svg>
<div class="abs" style="left:250.55px;top:515px;width:28.85px;height:40px;border:1px solid #000;background:#f4f4f4;box-sizing:border-box"></div>
<svg class="abs" style="left:252.35px;top:516px;--bg:#83dea0;--tr:#b5ebc6;--b2:#29d660" width="25.2" height="24" viewBox="0 0 30 30" preserveAspectRatio="none"><rect x="0.8" y="0.8" width="28.4" height="28.4" fill="#29d660" stroke="#123a1c" stroke-width="1.6"/><use href="#i5"/></svg>
<div class="abs" style="left:279.4px;top:515px;width:28.85px;height:40px;border:1px solid #000;background:#f4f4f4;box-sizing:border-box"></div>
<svg class="abs" style="left:281.2px;top:516px;--bg:#83dea0;--tr:#b5ebc6;--b2:#29d660" width="25.2" height="24" viewBox="0 0 30 30" preserveAspectRatio="none"><rect x="0.8" y="0.8" width="28.4" height="28.4" fill="#29d660" stroke="#123a1c" stroke-width="1.6"/><use href="#i6"/></svg>
<div class="abs" style="left:308.25px;top:515px;width:28.85px;height:40px;border:1px solid #000;background:#f4f4f4;box-sizing:border-box"></div>
<svg class="abs" style="left:310.05px;top:516px;--bg:#83dea0;--tr:#b5ebc6;--b2:#29d660" width="25.2" height="24" viewBox="0 0 30 30" preserveAspectRatio="none"><rect x="0.8" y="0.8" width="28.4" height="28.4" fill="#29d660" stroke="#123a1c" stroke-width="1.6"/><use href="#i7"/></svg>
<div class="abs" style="left:337.1px;top:515px;width:28.85px;height:40px;border:1px solid #000;background:#f4f4f4;box-sizing:border-box"></div>
<svg class="abs" style="left:338.9px;top:516px;--bg:#83dea0;--tr:#b5ebc6;--b2:#29d660" width="25.2" height="24" viewBox="0 0 30 30" preserveAspectRatio="none"><rect x="0.8" y="0.8" width="28.4" height="28.4" fill="#29d660" stroke="#123a1c" stroke-width="1.6"/><use href="#i8"/></svg>
<div class="abs" style="left:365.95px;top:515px;width:28.85px;height:40px;border:1px solid #000;background:#f4f4f4;box-sizing:border-box"></div>
<svg class="abs" style="left:367.75px;top:516px;--bg:#83dea0;--tr:#b5ebc6;--b2:#29d660" width="25.2" height="24" viewBox="0 0 30 30" preserveAspectRatio="none"><rect x="0.8" y="0.8" width="28.4" height="28.4" fill="#29d660" stroke="#123a1c" stroke-width="1.6"/><use href="#i9"/></svg>
<div class="b" style="left:10px;top:559px;width:94px;height:39px"></div>
<div class="g" style="left:104px;top:557px;width:603px;height:42px"></div>
<div class="t" style="left:10px;top:571px;width:94px;text-align:center;font-size:13.6px;font-weight:bold;font-style:italic;color:#fff">Slovenija</div>
<div class="abs" style="left:574.3px;top:558px;width:24.8px;height:21px;background:#ffff00"></div>
<div class="abs" style="left:574.3px;top:579px;width:25px;height:18px;background:#4f97b6"></div>
<div class="t" style="left:574.3px;top:580px;width:25px;text-align:center;font-family:'DejaVu Sans',sans-serif;font-size:14px;font-weight:bold;font-style:italic;color:#fff">so</div>
<div class="abs" style="left:599.9px;top:558px;width:24.8px;height:21px;background:#29d660"></div>
<div class="t" style="left:599.9px;top:580px;width:25px;text-align:center;font-size:15px;color:#222">ne</div>
<div class="abs" style="left:625.5px;top:558px;width:24.8px;height:21px;background:#ffff00"></div>
<div class="t" style="left:625.5px;top:580px;width:25px;text-align:center;font-size:15px;color:#222">po</div>
<div class="abs" style="left:651.1px;top:558px;width:24.8px;height:21px;background:#ffff00"></div>
<div class="t" style="left:651.1px;top:580px;width:25px;text-align:center;font-size:15px;color:#222">to</div>
<div class="abs" style="left:676.7px;top:558px;width:24.8px;height:21px;background:#ffff00"></div>
<div class="t" style="left:676.7px;top:580px;width:25px;text-align:center;font-size:15px;color:#222">sr</div>
<div class="b" style="left:714px;top:155px;width:169px;height:28.5px"></div>
<div class="t" style="left:723px;top:163px;font-size:12px;font-weight:bold;color:#fff">Legenda</div>
<div class="abs" style="left:714px;top:185px;width:169px;height:342px;background:#e3ecf4;border-bottom:1px solid #b5bcc4"></div>
<div class="abs" style="left:714px;top:528px;width:169px;height:10.5px;background:#e9f0f7"></div>
<svg class="ic" style="top:189px" width="30" height="30" viewBox="0 0 30 30"><rect x="1" y="1" width="28" height="28" fill="#fff" stroke="#000" stroke-width="2"/><use href="#i0"/></svg>
<div class="lg" style="top:194.5px">Veter</div>
<svg class="ic" style="top:222.5px" width="30" height="30" viewBox="0 0 30 30"><rect x="1" y="1" width="28" height="28" fill="#fff" stroke="#000" stroke-width="2"/><use href="#i1"/></svg>
<div class="lg" style="top:228px">Dež</div>
<svg class="ic" style="top:256px" width="30" height="30" viewBox="0 0 30 30"><rect x="1" y="1" width="28" height="28" fill="#fff" stroke="#000" stroke-width="2"/><use href="#i2"/></svg>
<div class="lg" style="top:261.5px">Nevihte</div>
<svg class="ic" style="top:289.5px" width="30" height="30" viewBox="0 0 30 30"><rect x="1" y="1" width="28" height="28" fill="#fff" stroke="#000" stroke-width="2"/><use href="#i3"/></svg>
<div class="lg" style="top:295px">Sneg</div>
<svg class="ic" style="top:323px" width="30" height="30" viewBox="0 0 30 30"><rect x="1" y="1" width="28" height="28" fill="#fff" stroke="#000" stroke-width="2"/><use href="#i4"/></svg>
<div class="lg" style="top:328.5px">Poledica/žled</div>
<svg class="ic" style="top:356.5px" width="30" height="30" viewBox="0 0 30 30"><rect x="1" y="1" width="28" height="28" fill="#fff" stroke="#000" stroke-width="2"/><use href="#i5"/></svg>
<div class="lg" style="top:362px">Nizka temperatura</div>
<svg class="ic" style="top:390px" width="30" height="30" viewBox="0 0 30 30"><rect x="1" y="1" width="28" height="28" fill="#fff" stroke="#000" stroke-width="2"/><use href="#i6"/></svg>
<div class="lg" style="top:395.5px">Visoka temperatura</div>
<svg class="ic" style="top:423.5px" width="30" height="30" viewBox="0 0 30 30"><rect x="1" y="1" width="28" height="28" fill="#fff" stroke="#000" stroke-width="2"/><use href="#i7"/></svg>
<div class="lg" style="top:429px">Požarna ogroženost</div>
<svg class="ic" style="top:457px" width="30" height="30" viewBox="0 0 30 30"><rect x="1" y="1" width="28" height="28" fill="#fff" stroke="#000" stroke-width="2"/><use href="#i8"/></svg>
<div class="lg" style="top:462.5px">Obalni dogodek</div>
<svg class="ic" style="top:490.5px" width="30" height="30" viewBox="0 0 30 30"><rect x="1" y="1" width="28" height="28" fill="#fff" stroke="#000" stroke-width="2"/><use href="#i9"/></svg>
<div class="lg" style="top:496px">Snežni plazovi</div>
<div class="b" style="left:714px;top:538.5px;width:169px;height:28.5px"></div>
<div class="t" style="left:723px;top:546px;font-size:12px;font-weight:bold;color:#fff">Legenda</div>
<div class="abs" style="left:714px;top:568px;width:169px;height:133px;background:#e3ecf4"></div>
<div class="sq" style="top:572.5px;background:#29d660"></div>
<div class="lg" style="top:578.5px">Brez posebnosti</div>
<div class="sq" style="top:606.1px;background:#ffff00"></div>
<div class="lg" style="top:612.1px">Bodite pozorni</div>
<div class="sq" style="top:639.7px;background:#ffbf10"></div>
<div class="lg" style="top:645.7px">Bodite pripravljeni</div>
<div class="sq" style="top:673.3px;background:#ff0a0a"></div>
<div class="lg" style="top:679.3px">Ukrepajte</div>
<div class="abs" style="left:10px;top:616.5px;width:697px;height:196px;background:#f2f2f2;border:1px solid #d5dbe2;box-sizing:border-box"></div>
<div class="b" style="left:11px;top:618px;width:696px;height:47.5px"></div>
<div class="t" style="left:11px;top:623px;width:349px;text-align:center;font-size:13px;letter-spacing:.3px;font-weight:bold;font-style:italic;color:#fff">VSA OPOZORILA - danes - SOBOTA</div>
<div class="t" style="left:11px;top:644px;width:349px;text-align:center;font-size:13px;letter-spacing:.35px;font-weight:bold;font-style:italic;color:#fff">Slovenija</div>
<div class="t" style="left:360px;top:633px;width:347px;text-align:center;font-size:13.6px;font-weight:bold;font-style:italic;color:#fff">v teku dneva</div>
<div class="t" style="left:11px;top:668.5px;width:362px;text-align:center;font-size:12px;color:#2a5d8a">Opis in nasveti</div>
<div class="tk" style="left:359px">00</div>
<div class="abs" style="left:373.5px;top:684px;width:1px;height:5px;background:#9fb4c8"></div>
<div class="tk" style="left:398px">03</div>
<div class="abs" style="left:412.5px;top:684px;width:1px;height:5px;background:#9fb4c8"></div>
<div class="tk" style="left:437px">06</div>
<div class="abs" style="left:451.5px;top:684px;width:1px;height:5px;background:#9fb4c8"></div>
<div class="tk" style="left:482.5px">09</div>
<div class="abs" style="left:497px;top:684px;width:1px;height:5px;background:#9fb4c8"></div>
<div class="tk" style="left:521.5px">12</div>
<div class="abs" style="left:536px;top:684px;width:1px;height:5px;background:#9fb4c8"></div>
<div class="tk" style="left:560.5px">15</div>
<div class="abs" style="left:575px;top:684px;width:1px;height:5px;background:#9fb4c8"></div>
<div class="tk" style="left:599.5px">18</div>
<div class="abs" style="left:614px;top:684px;width:1px;height:5px;background:#9fb4c8"></div>
<div class="tk" style="left:638.5px">21</div>
<div class="abs" style="left:653px;top:684px;width:1px;height:5px;background:#9fb4c8"></div>
<div class="tk" style="left:677.5px">24</div>
<div class="abs" style="left:692px;top:684px;width:1px;height:5px;background:#9fb4c8"></div>
<div class="hr" style="top:689px"></div>
<div class="row" style="top:694.4px">Slovenija - severozahod</div>
<div class="abs" style="left:374px;top:690px;width:318.5px;height:23.7px;background:#29d660"></div>
<div class="abs" style="left:536.5px;top:690px;width:156px;height:23.7px;background:#ffff00"></div>
<svg class="abs" style="left:340px;top:691px" width="21" height="21" viewBox="2 2 26 26"><rect x="2.6" y="2.6" width="24.8" height="24.8" fill="#ffff00" stroke="#000" stroke-width="1.6"/><use href="#i2"/></svg>
<div class="hr" style="top:713.7px"></div>
<div class="row" style="top:719.1px">Slovenija - jugozahod</div>
<div class="abs" style="left:374px;top:714.7px;width:318.5px;height:23.6px;background:#29d660"></div>
<div class="hr" style="top:738.3px"></div>
<div class="row" style="top:743.7px">Slovenija - osrednja</div>
<div class="abs" style="left:374px;top:739.3px;width:318.5px;height:23.7px;background:#29d660"></div>
<div class="abs" style="left:549.5px;top:739.3px;width:143px;height:23.7px;background:#ffff00"></div>
<svg class="abs" style="left:340px;top:740.3px" width="21" height="21" viewBox="2 2 26 26"><rect x="2.6" y="2.6" width="24.8" height="24.8" fill="#ffff00" stroke="#000" stroke-width="1.6"/><use href="#i2"/></svg>
<div class="hr" style="top:763px"></div>
<div class="row" style="top:768.4px">Slovenija - jugovzhod</div>
<div class="abs" style="left:374px;top:764px;width:318.5px;height:23.5px;background:#29d660"></div>
<div class="abs" style="left:562.5px;top:764px;width:130px;height:23.5px;background:#ffff00"></div>
<svg class="abs" style="left:340px;top:765px" width="21" height="21" viewBox="2 2 26 26"><rect x="2.6" y="2.6" width="24.8" height="24.8" fill="#ffff00" stroke="#000" stroke-width="1.6"/><use href="#i2"/></svg>
<div class="hr" style="top:787.5px"></div>
<div class="row" style="top:792.9px">Slovenija - severovzhod</div>
<div class="abs" style="left:374px;top:788.5px;width:318.5px;height:23.5px;background:#29d660"></div>
<div class="abs" style="left:562.5px;top:788.5px;width:130px;height:23.5px;background:#ffff00"></div>
<svg class="abs" style="left:340px;top:789.5px" width="21" height="21" viewBox="2 2 26 26"><rect x="2.6" y="2.6" width="24.8" height="24.8" fill="#ffff00" stroke="#000" stroke-width="1.6"/><use href="#i2"/></svg>
<div class="hr" style="top:812px;background:#c5ccd4"></div>
<div class="abs" style="left:412.5px;top:690px;width:1px;height:122px;background:rgba(255,255,255,.75)"></div>
<div class="abs" style="left:451.5px;top:690px;width:1px;height:122px;background:rgba(255,255,255,.75)"></div>
<div class="abs" style="left:497px;top:690px;width:1px;height:122px;background:rgba(255,255,255,.75)"></div>
<div class="abs" style="left:536px;top:690px;width:1px;height:122px;background:rgba(255,255,255,.75)"></div>
<div class="abs" style="left:575px;top:690px;width:1px;height:122px;background:rgba(255,255,255,.75)"></div>
<div class="abs" style="left:614px;top:690px;width:1px;height:122px;background:rgba(255,255,255,.75)"></div>
<div class="abs" style="left:653px;top:690px;width:1px;height:122px;background:rgba(255,255,255,.75)"></div>
<div class="abs" style="left:465px;top:690px;width:2px;height:122px;background:#111"></div>
<div class="abs" style="left:483px;top:690px;width:2px;height:122px;background:#111"></div>
<div class="abs" style="left:374px;top:713.7px;width:318.5px;height:1px;background:rgba(235,240,245,.85)"></div>
<div class="abs" style="left:374px;top:738.3px;width:318.5px;height:1px;background:rgba(235,240,245,.85)"></div>
<div class="abs" style="left:374px;top:763px;width:318.5px;height:1px;background:rgba(235,240,245,.85)"></div>
<div class="abs" style="left:374px;top:787.5px;width:318.5px;height:1px;background:rgba(235,240,245,.85)"></div>
</body></html>
